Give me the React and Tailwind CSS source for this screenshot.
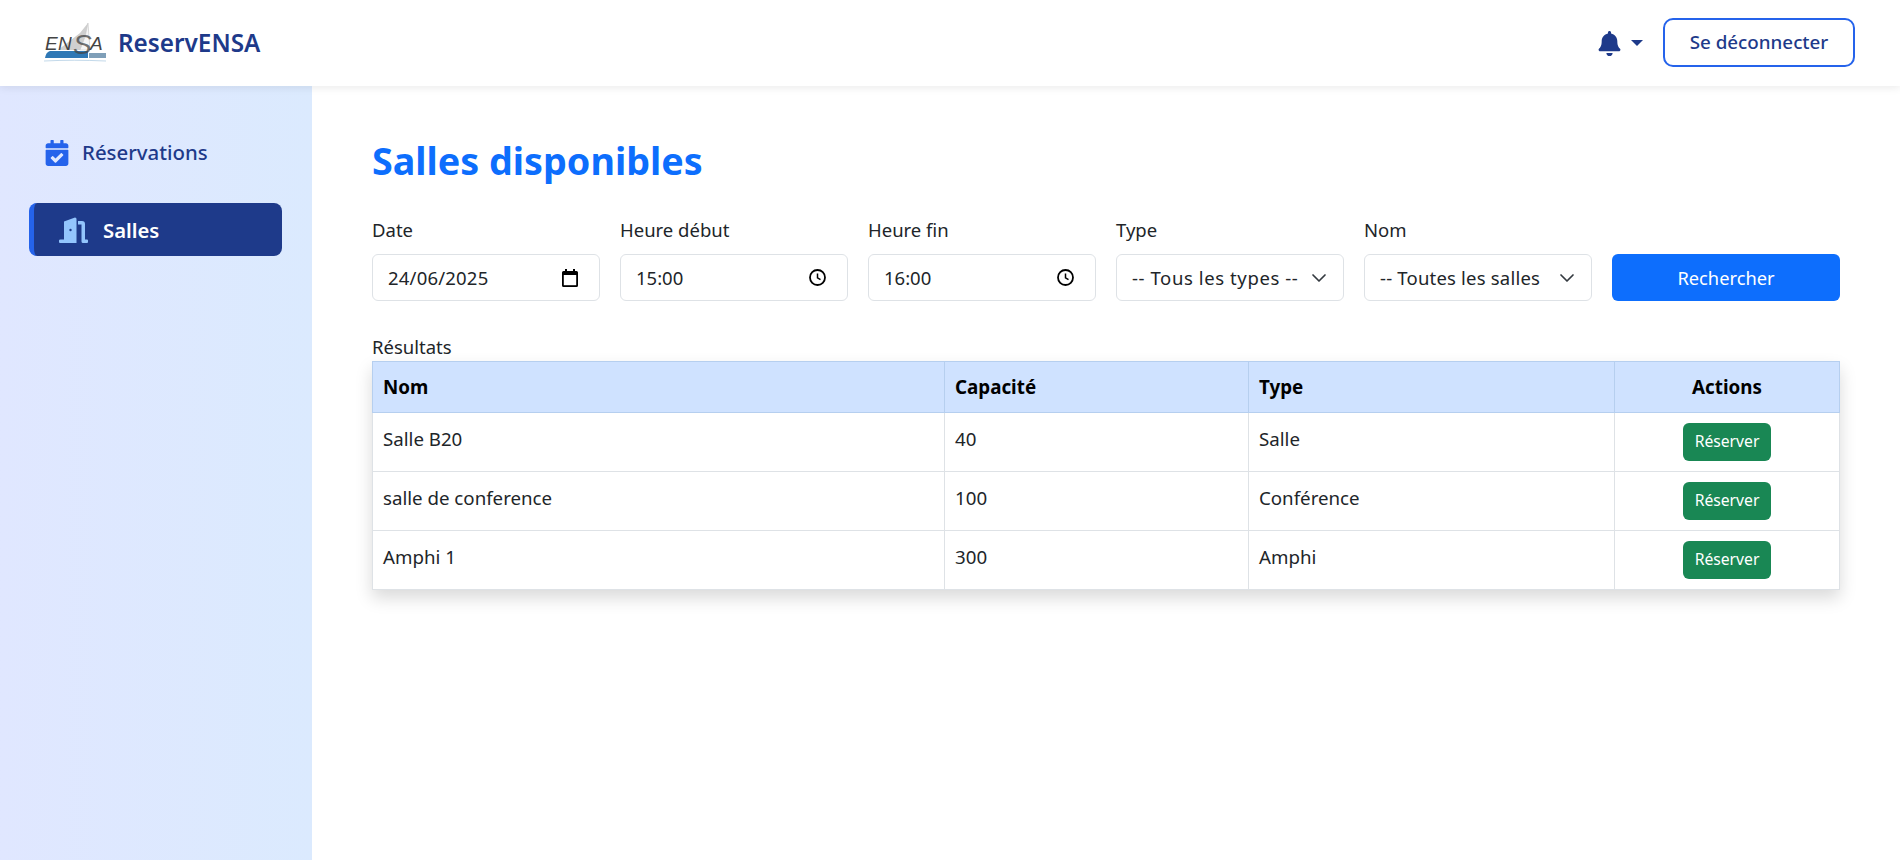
import React from "react";
import { FaBell, FaCalendarCheck } from "react-icons/fa";

const font = { fontFamily: '"Noto Sans", sans-serif' };

function Logo() {
  const t = { fontStyle: "italic", fontFamily: '"Liberation Sans", sans-serif', fill: "#444" };
  return (
    <svg width="64" height="40" viewBox="0 0 64 40" className="shrink-0">
      <path d="M14 27 L36 10 L44 0 L46 27 Z" fill="#cfcfcf" />
      <path d="M44 0 L46 27 L36 27 L41 14 Z" fill="#f5f5f5" stroke="#c4c4c4" strokeWidth="0.5" />
      <path d="M1 35 C2 30 4 28 7 28 L44 28 L44 35 Z" fill="#2f78b5" />
      <rect x="45" y="30" width="17" height="5" fill="#7f9fb8" />
      <path d="M0 38 C20 37 40 37 62 38" stroke="#c3d9ea" strokeWidth="1" fill="none" />
      <text x="1" y="27" fontSize="19" style={t}>E</text>
      <text x="14" y="27" fontSize="19" style={t}>N</text>
      <text x="29" y="31" fontSize="28" style={t} fillOpacity="0.75">S</text>
      <text x="46" y="27" fontSize="19" style={t}>A</text>
    </svg>
  );
}

function DoorIcon() {
  return (
    <svg width="29" height="26" viewBox="0 0 29 26" fill="#93c5fd" className="shrink-0">
      <path d="M5 4.5 L16 0.5 Q17.5 0.5 17.5 2 L17.5 26 L1 26 Q0 26 0 25 L0 23.5 Q0 22.5 1.5 22.5 L5 22.5 Z" />
      <circle cx="11.5" cy="13" r="1.2" fill="#1e3a8a" />
      <path d="M19 4 L23 4 Q26 4 26 7 L26 22.5 L28 22.5 Q29 22.5 29 23.5 L29 25 Q29 26 28 26 L24 26 Q22.5 26 22.5 24.5 L22.5 7.5 L19 7.5 Z" />
    </svg>
  );
}

function Chevron() {
  return (
    <svg width="16" height="16" viewBox="0 0 16 16" fill="none" stroke="#343a40" strokeWidth="1.7" strokeLinecap="round" strokeLinejoin="round" className="shrink-0">
      <path d="m2 5 6 6 6-6" />
    </svg>
  );
}

function CalendarGlyph() {
  return (
    <svg width="16" height="18" viewBox="0 0 16 18" className="shrink-0">
      <path d="M3 0h2v2h6V0h2v2h1.5A1.5 1.5 0 0 1 16 3.5v13a1.5 1.5 0 0 1-1.5 1.5h-13A1.5 1.5 0 0 1 0 16.5v-13A1.5 1.5 0 0 1 1.5 2H3V0Z" fill="#000" />
      <rect x="1.8" y="6" width="12.4" height="10.2" fill="#fff" />
    </svg>
  );
}

function ClockGlyph() {
  return (
    <svg width="17" height="17" viewBox="0 0 17 17" fill="none" stroke="#000" strokeWidth="1.8" className="shrink-0">
      <circle cx="8.5" cy="8.5" r="7.5" />
      <path d="M8.5 4.5v4.3l3 1.8" strokeWidth="1.5" />
    </svg>
  );
}

function Field({ label, value, icon, extra = "", pr = "pr-[21px]" }) {
  return (
    <div className="flex flex-col">
      <div className="mb-[12px] h-[24px] text-[18.5px] leading-[24px] text-[#212529]">{label}</div>
      <div className={`flex h-[47px] items-center justify-between rounded-[6px] border border-[#dee2e6] bg-white pl-[15px] text-[18.5px] text-[#212529] ${pr}`}>
        <span className={`whitespace-nowrap ${extra}`}>{value}</span>
        {icon}
      </div>
    </div>
  );
}

const rows = [
  ["Salle B20", "40", "Salle"],
  ["salle de conference", "100", "Conférence"],
  ["Amphi 1", "300", "Amphi"],
];

export default function App() {
  return (
    <div className="flex min-h-[860px] flex-col bg-white text-[#212529]" style={font}>
      <header className="relative z-10 flex h-[86px] items-center justify-between bg-white pl-[44px] pr-[45px] shadow-[0_2px_8px_rgba(0,0,0,0.08)]">
        <div className="flex items-center gap-[10px]">
          <Logo />
          <span className="text-[24.3px] font-semibold text-[#1e3a8a]">ReservENSA</span>
        </div>
        <div className="flex items-center">
          <FaBell className="text-[25px] text-[#1e3a8a]" />
          <span className="ml-[9px] h-0 w-0 border-x-[6px] border-t-[6px] border-x-transparent border-t-[#1e3a8a]" />
          <button className="mb-[2px] ml-[20px] flex h-[49px] w-[192px] items-center justify-center rounded-[10px] border-2 border-[#2563eb] bg-white text-[18.8px] font-medium text-[#1e3a8a]">
            Se déconnecter
          </button>
        </div>
      </header>
      <div className="flex flex-1">
        <aside className="w-[312px] shrink-0 bg-gradient-to-r from-[#e0e7ff] to-[#dbeafe] px-[29px] pt-[40px]">
          <div className="flex h-[53px] items-center gap-[12px] pl-[15px] text-[20.4px] font-medium text-[#1e3a8a]">
            <FaCalendarCheck className="text-[26px] text-[#2563eb]" />
            Réservations
          </div>
          <div className="mt-[24px] flex h-[53px] w-[253px] items-center gap-[15px] rounded-[8px] border-l-[5px] border-[#2563eb] bg-[#1e3a8a] pl-[25px] text-[20.3px] font-semibold text-white">
            <DoorIcon />
            <span className="pt-[2px]">Salles</span>
          </div>
        </aside>
        <main className="flex-1 pl-[60px] pr-[60px] pt-[45px]">
          <h1 className="text-[37.7px] font-bold leading-[60px] text-[#0d6efd]">Salles disponibles</h1>
          <div className="mt-[27px] grid grid-cols-6 items-end gap-x-[20px]">
            <Field label="Date" value="24/06/2025" icon={<CalendarGlyph />} extra="tracking-[0.2px]" />
            <Field label="Heure début" value="15:00" icon={<ClockGlyph />} />
            <Field label="Heure fin" value="16:00" icon={<ClockGlyph />} />
            <Field label="Type" value="-- Tous les types --" icon={<Chevron />} extra="tracking-[0.6px]" pr="pr-[16px]" />
            <Field label="Nom" value="-- Toutes les salles" icon={<Chevron />} extra="tracking-[0.2px]" pr="pr-[16px]" />
            <button className="flex h-[47px] items-center justify-center rounded-[6px] bg-[#0d6efd] text-[18.3px] text-white">Rechercher</button>
          </div>
          <div className="mt-[34px] h-[26px] text-[18.5px] leading-[24px] text-[#212529]">Résultats</div>
          <table className="w-full table-fixed border-collapse bg-white shadow-[0_8px_16px_rgba(0,0,0,0.15)]">
            <colgroup>
              <col className="w-[572px]" />
              <col className="w-[304px]" />
              <col className="w-[366px]" />
              <col />
            </colgroup>
            <thead>
              <tr className="h-[51px] bg-[#cfe2ff] text-[18.8px] font-bold text-black">
                <th className="border border-[#b6cfef] px-[10px] text-left">Nom</th>
                <th className="border border-[#b6cfef] px-[10px] text-left">Capacité</th>
                <th className="border border-[#b6cfef] px-[10px] text-left">Type</th>
                <th className="border border-[#b6cfef] px-[10px] text-center">Actions</th>
              </tr>
            </thead>
            <tbody>
              {rows.map((r) => (
                <tr key={r[0]} className="h-[59px] text-[18.7px] text-[#212529]">
                  <td className="border border-[#dee2e6] px-[10px] pb-[6px]">{r[0]}</td>
                  <td className="border border-[#dee2e6] px-[10px] pb-[6px]">{r[1]}</td>
                  <td className="border border-[#dee2e6] px-[10px] pb-[6px]">{r[2]}</td>
                  <td className="border border-[#dee2e6] px-[10px] text-center align-middle">
                    <button className="mx-auto flex h-[38px] w-[88px] items-center justify-center rounded-[6px] bg-[#198754] text-[15.7px] text-white">Réserver</button>
                  </td>
                </tr>
              ))}
            </tbody>
          </table>
        </main>
      </div>
    </div>
  );
}
